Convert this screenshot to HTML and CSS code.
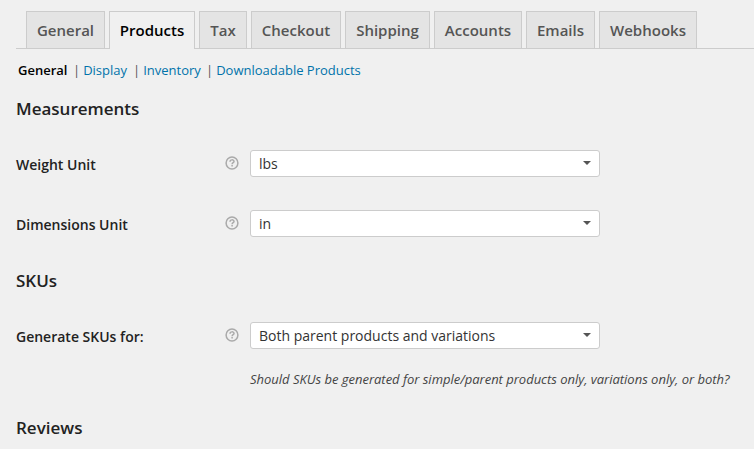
FILE: index.html
```html
<!DOCTYPE html>
<html lang="en">
<head>
<meta charset="utf-8">
<title>Product settings</title>
<link rel="stylesheet" href="styles.css">
</head>
<body>
<nav class="tabs">
<a class="tab t1">General</a><a class="tab t2 active">Products</a><a class="tab t3">Tax</a><a class="tab t4">Checkout</a><a class="tab t5">Shipping</a><a class="tab t6">Accounts</a><a class="tab t7">Emails</a><a class="tab t8">Webhooks</a>
</nav>
<ul class="sections">
<li class="s1"><a class="current">General</a></li>
<li class="s2"><i>|</i><a>Display</a></li>
<li class="s3"><i>|</i><a>Inventory</a></li>
<li class="s4"><i>|</i><a>Downloadable Products</a></li>
</ul>
<main>
<h3>Measurements</h3>
<div class="row">
<label>Weight Unit</label>
<svg class="help" viewBox="0 0 14 14"><circle cx="7" cy="7" r="5.9"/><path d="M5 5.7C5 3.3 9 3.3 9 5.5C9 6.8 7.1 6.6 7.1 8.2M7.1 9.1V10.6"/></svg>
<div class="select"><span>lbs</span><b></b></div>
</div>
<div class="row">
<label>Dimensions Unit</label>
<svg class="help" viewBox="0 0 14 14"><circle cx="7" cy="7" r="5.9"/><path d="M5 5.7C5 3.3 9 3.3 9 5.5C9 6.8 7.1 6.6 7.1 8.2M7.1 9.1V10.6"/></svg>
<div class="select"><span>in</span><b></b></div>
</div>
<h3 class="skus">SKUs</h3>
<div class="row">
<label>Generate SKUs for:</label>
<svg class="help" viewBox="0 0 14 14"><circle cx="7" cy="7" r="5.9"/><path d="M5 5.7C5 3.3 9 3.3 9 5.5C9 6.8 7.1 6.6 7.1 8.2M7.1 9.1V10.6"/></svg>
<div class="select"><span>Both parent products and variations</span><b></b></div>
</div>
<p class="description">Should SKUs be generated for simple/parent products only, variations only, or both?</p>
<h3 class="reviews">Reviews</h3>
</main>
</body>
</html>
```
FILE: styles.css
```css
* { box-sizing: border-box; }
body {
  margin: 0;
  height: 449px;
  overflow: hidden;
  background: #f0f0f0;
  color: #222;
  font-family: "Open Sans", sans-serif;
  font-size: 14px;
}
.tabs {
  display: flex;
  gap: 4px;
  height: 49px;
  margin-left: 16px;
  padding: 11px 0 0 10px;
  border-bottom: 1px solid #ccc;
}
.tab {
  height: 37px;
  border: 1px solid #ccc;
  border-bottom: 0;
  background: #e4e4e4;
  color: #555;
  font-size: 15px;
  line-height: 36px;
  font-weight: 600;
  text-align: center;
  white-space: nowrap;
}
.active { height: 38px; background: #f0f0f0; color: #000; }
.t1 { width: 79px; }
.t2 { width: 86px; }
.t3 { width: 48px; }
.t4 { width: 90px; }
.t5 { width: 85px; }
.t6 { width: 88px; }
.t7 { width: 69px; }
.t8 { width: 98px; }
.sections {
  display: flex;
  height: 43px;
  margin: 0;
  padding: 11px 0 0 18px;
  list-style: none;
  font-size: 13px;
  line-height: 20px;
  white-space: nowrap;
}
.sections i { font-style: normal; color: #555; margin-right: 3px; }
.sections a { color: #0073aa; }
.sections .current { color: #000; font-weight: 600; }
.s1 { width: 55px; }
.s2 { width: 60px; }
.s3 { width: 73px; }
main { padding-left: 16px; }
h3 { height: 42px; margin: 0; padding-top: 6px; font-size: 17px; line-height: 22px; font-weight: 600; }
.row { display: flex; height: 60px; padding-top: 16px; align-items: flex-start; }
label { width: 209px; font-weight: 600; line-height: 29px; white-space: nowrap; }
.help { width: 14px; height: 14px; margin: 6px 11px 0 0; fill: none; stroke: #aaa; stroke-width: 1.5; }
.select {
  display: flex;
  justify-content: space-between;
  align-items: center;
  width: 350px;
  height: 27px;
  padding: 0 8px;
  border: 1px solid #ccc;
  border-radius: 3px;
  background: #fff;
  color: #333;
}
.select b { margin-bottom: 1px; border: 4px solid transparent; border-top: 4px solid #555; border-bottom: 0; }
.description {
  margin: 3px 0 0 234px;
  color: #444;
  font-size: 13px;
  font-style: italic;
  line-height: 20px;
  letter-spacing: -0.015px;
  white-space: nowrap;
}
.skus { margin-top: 10px; }
.reviews { margin-top: 22px; }
```
